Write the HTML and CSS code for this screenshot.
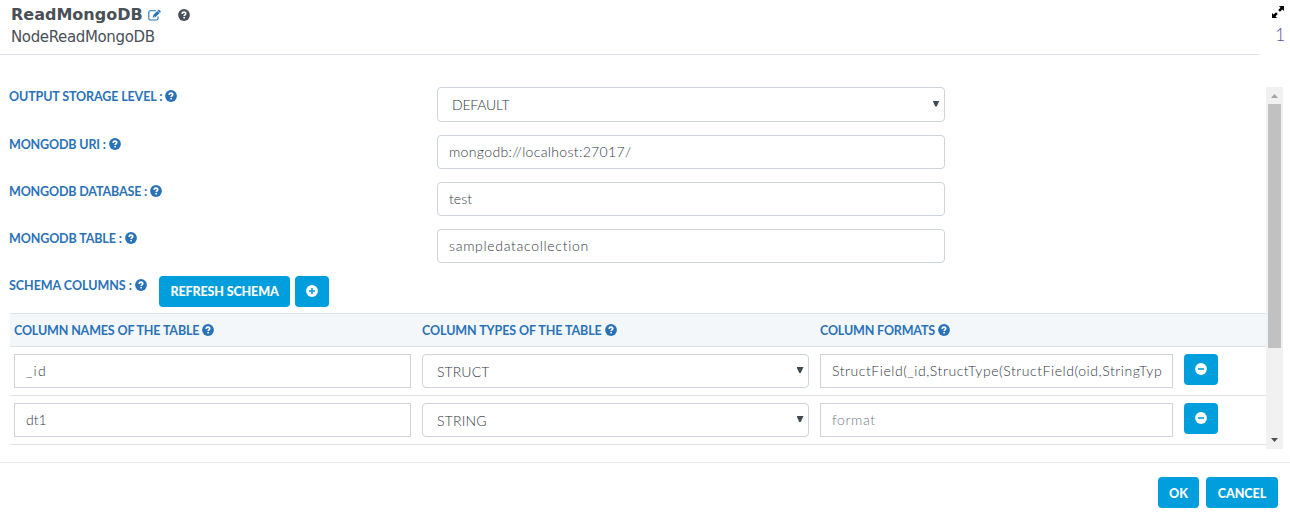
FILE: index.html
```
<!DOCTYPE html>
<html lang="en">
<head>
<meta charset="utf-8">
<title>ReadMongoDB</title>
<link rel="stylesheet" href="styles.css">
</head>
<body>
<svg width="0" height="0" class="defs">
  <symbol id="help" viewBox="0 0 12 12"><circle cx="6" cy="6" r="5.900" fill="currentColor"/><path d="M4 4.800Q4.200 3.100 6 3.100Q7.900 3.200 7.800 4.700Q7.700 5.500 6.800 6Q6.200 6.300 6.200 7.100" fill="none" stroke="#fff" stroke-width="1.600"/><rect x="5.300" y="7.900" width="1.700" height="1.500" fill="#fff"/></symbol>
  <symbol id="minus" viewBox="0 0 12 12"><circle cx="6" cy="6" r="5.900" fill="#fff"/><path d="M3 6H9" stroke="#009edd" stroke-width="1.600"/></symbol>
  <symbol id="plus" viewBox="0 0 12 12"><circle cx="6" cy="6" r="5.900" fill="#fff"/><path d="M3 6H9M6 3V9" stroke="#009edd" stroke-width="1.600"/></symbol>
</svg>
<div class="dialog">
  <header class="header">
    <div class="heading">
      <div class="title-row"><h1 class="title">ReadMongoDB</h1>
        <svg class="edit" viewBox="0 0 14 12"><path d="M10 7.500V9.500Q10 11 8.500 11H2.300Q.8 11 .8 9.500V3.300Q.8 1.800 2.300 1.800H8" fill="none" stroke="#2a72b8" stroke-width="1.100"/><path d="M4.700 8.500L5.200 6L10.800.5L13 2.700L7.300 8.200Z" fill="#2a72b8"/><path d="M5.700 6.700L6.700 7.700M9.500 1.900L11.600 4" stroke="#fff" stroke-width=".7"/></svg>
        <svg class="icon title-help"><use href="#help"/></svg>
      </div>
      <div class="subtitle">NodeReadMongoDB</div>
    </div>
    <div class="corner">
      <svg class="expand" viewBox="0 0 12 12"><path d="M7 0H12V5L10.300 3.500L8 5.800L6.200 4L8.500 1.700ZM5 12H0V7L1.700 8.500L4 6.200L5.800 8L3.500 10.300Z"/></svg>
      <span class="count">1</span>
    </div>
  </header>
  <main class="body">
    <div class="content">
      <div class="field first"><label class="label l1">OUTPUT STORAGE LEVEL : <svg class="icon"><use href="#help"/></svg></label><div class="control select"><span class="s1">DEFAULT</span><i class="caret"></i></div></div>
      <div class="field"><label class="label l2">MONGODB URI : <svg class="icon"><use href="#help"/></svg></label><div class="control"><span class="v1">mongodb://localhost:27017/</span></div></div>
      <div class="field"><label class="label l3">MONGODB DATABASE : <svg class="icon"><use href="#help"/></svg></label><div class="control"><span class="v2">test</span></div></div>
      <div class="field"><label class="label l4">MONGODB TABLE : <svg class="icon"><use href="#help"/></svg></label><div class="control"><span class="v3">sampledatacollection</span></div></div>
      <div class="schema"><span class="label l5">SCHEMA COLUMNS : <svg class="icon"><use href="#help"/></svg></span><button class="btn refresh">REFRESH SCHEMA</button><button class="btn square"><svg class="icon"><use href="#plus"/></svg></button></div>
      <div class="table">
        <div class="row head"><span class="label h1">COLUMN NAMES OF THE TABLE <svg class="icon"><use href="#help"/></svg></span><span class="label h2">COLUMN TYPES OF THE TABLE <svg class="icon"><use href="#help"/></svg></span><span class="label h3">COLUMN FORMATS <svg class="icon"><use href="#help"/></svg></span></div>
        <div class="row"><div class="control cell"><span class="id">_id</span></div><div class="control select"><span class="s2">STRUCT</span><i class="caret"></i></div><div class="control cell"><span class="v4">StructField(_id,StructType(StructField(oid,StringTyp</span></div><button class="btn square"><svg class="icon"><use href="#minus"/></svg></button></div>
        <div class="row"><div class="control cell"><span class="dt">dt1</span></div><div class="control select"><span class="s3">STRING</span><i class="caret"></i></div><div class="control cell"><span class="placeholder">format</span></div><button class="btn square"><svg class="icon"><use href="#minus"/></svg></button></div>
      </div>
    </div>
    <div class="scrollbar"><i class="arrow up"></i><div class="thumb"></div><i class="arrow down"></i></div>
  </main>
  <footer class="footer"><button class="btn ok">OK</button><button class="btn cancel">CANCEL</button></footer>
</div>
</body>
</html>
```
FILE: styles.css
```
* { box-sizing: border-box; }
body { margin: 0; background: #fff; color: #495057; font: 14px Lato, sans-serif; overflow: hidden; }
.defs { position: absolute; }
.dialog { height: 513px; display: flex; flex-direction: column; }
.header { height: 87px; display: flex; justify-content: space-between; }
.heading { width: 1259px; height: 55px; border-bottom: 1px solid #dee2e6; padding: 4px 0 0 11px; font-family: "DejaVu Sans", sans-serif; }
.title-row { display: flex; align-items: center; height: 22px; }
.title { margin: 0; font-size: 16px; line-height: 22px; width: 131px; white-space: nowrap; }
.edit { width: 14px; height: 12px; margin-left: 6px; }
.title-help { margin-left: 16px; }
.subtitle { font-size: 15px; line-height: 22px; letter-spacing: -.36px; }
.corner { width: 31px; padding: 6px 6px 0 0; display: flex; flex-direction: column; align-items: flex-end; }
.expand { width: 12px; height: 12px; }
.count { font-size: 17px; line-height: 20px; margin: 7px -1px 0 0; color: #5a50a8; font-weight: 300; }
.icon { width: 12px; height: 12px; flex: none; display: inline-block; vertical-align: -1px; }
.body { flex: none; height: 376px; display: flex; border-bottom: 1px solid #e9ecef; }
.content { width: 1257px; margin-left: 9px; }
.field { height: 47px; display: grid; grid-template-columns: 428px 508px; align-items: start; }
.field.first { height: 48px; }
.first .control { height: 35px; }
.label { color: #2a72b8; font-size: 12.5px; font-weight: 700; line-height: 19px; white-space: nowrap; }
.l1 { letter-spacing: -.12px; }
.l2, .l3 { letter-spacing: -.15px; }
.l4 { letter-spacing: -.12px; }
.l5 { letter-spacing: -.03px; }
.h1 { letter-spacing: -.15px; }
.h2 { letter-spacing: -.09px; }
.h3 { letter-spacing: -.16px; }
.control { height: 34px; border: 1px solid #ced4da; border-radius: 4px; padding: 0 11px; display: flex; align-items: center; justify-content: space-between; white-space: nowrap; line-height: 34px; font-weight: 300; color: #30383f; letter-spacing: .5px; }
.s1 { letter-spacing: -.2px; }
.s2 { letter-spacing: .1px; }
.s3 { letter-spacing: .2px; }
.v1 { letter-spacing: .35px; }
.v2 { letter-spacing: .1px; }
.v3 { letter-spacing: .7px; }
.v4 { letter-spacing: .56px; }
.id { letter-spacing: 1.3px; }
.dt { letter-spacing: 0; }
.placeholder { color: #6f7880; letter-spacing: .6px; }
.select { padding: 1px 4.500px 0 14px; }
.caret { width: 7px; height: 6px; background: #414951; clip-path: polygon(0 0, 100% 0, 60% 100%, 40% 100%); margin-top: -3px; }
.cell { border-radius: 0; }
.schema { height: 37px; display: flex; align-items: flex-start; }
.schema .label { width: 150px; }
.btn { height: 31px; border: 0; border-radius: 4px; background: #009edd; color: #fff; font: 900 12.5px Lato, sans-serif; padding: 1px 0 0; display: flex; align-items: center; justify-content: center; white-space: nowrap; }
.refresh { width: 131px; margin-right: 5px; padding: 0; letter-spacing: -.12px; }
.square { width: 34px; padding: 0 0 1px; }
.table { margin-left: 1px; border-top: 1px solid #dee2e6; }
.row { height: 49px; display: grid; grid-template-columns: 397px 387px 353px 34px; column-gap: 11px; padding: 7px 0 0 4px; border-bottom: 1px solid #dee2e6; align-items: start; }
.head { height: 33px; background: #f3f7fa; }
.scrollbar { width: 17px; height: 362px; background: #f1f1f1; display: flex; flex-direction: column; align-items: center; }
.thumb { width: 13px; height: 244px; background: #c1c1c1; }
.arrow { width: 7px; height: 4px; }
.up { background: #a3a3a3; clip-path: polygon(50% 0, 100% 100%, 0 100%); margin: 7px 0 6px; }
.down { background: #505050; clip-path: polygon(0 0, 100% 0, 50% 100%); margin-top: 90px; }
.footer { display: flex; justify-content: flex-end; gap: 7px; padding: 14px 12px 0 0; }
.ok { width: 41px; }
.cancel { width: 72px; }
```
